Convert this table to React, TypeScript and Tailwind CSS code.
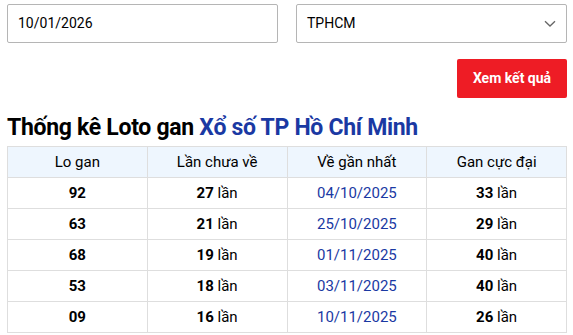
import React from "react";

const rows = [
  ["92", "27", "04/10/2025", "33"],
  ["63", "21", "25/10/2025", "29"],
  ["68", "19", "01/11/2025", "40"],
  ["53", "18", "03/11/2025", "40"],
  ["09", "16", "10/11/2025", "26"],
];

export default function App() {
  return (
    <div className="w-[573px] h-[335px] overflow-hidden bg-white pl-[7px] pr-[6px] pt-[4px] text-black" style={{ fontFamily: "Roboto, 'Liberation Sans', sans-serif" }}>
      <div className="grid grid-cols-2 gap-[18px]">
        <div className="h-[39px] border border-[#b5b5b5] rounded-[2px] flex items-center pl-[10px] text-[14px]">10/01/2026</div>
        <div className="h-[39px] border border-[#b5b5b5] rounded-[2px] flex items-center justify-between pl-[10px] pr-[10px] text-[14px]">
          <span>TPHCM</span>
          <svg width="12" height="8" viewBox="0 0 12 8" fill="none">
            <path d="M1 1.2 L6 6 L11 1.2" stroke="#666" strokeWidth="1.3" />
          </svg>
        </div>
      </div>
      <div className="flex justify-end mt-[16px]">
        <button className="w-[110px] h-[39px] bg-[#ee1c25] text-white text-[14px] font-bold rounded-[2px]">Xem kết quả</button>
      </div>
      <h2 className="mt-[16px] text-[23px] leading-[28px] font-bold tracking-[-0.3px]">
        Thống kê Loto gan <span className="text-[#1a39a3]">Xổ số TP Hồ Chí Minh</span>
      </h2>
      <table className="mt-[4px] w-[560px] border-collapse text-[15px] table-fixed">
        <thead>
          <tr className="bg-[#eef6fe] h-[31px]">
            {["Lo gan", "Lần chưa về", "Về gần nhất", "Gan cực đại"].map((h) => (
              <th key={h} className="border border-[#dedede] font-normal text-center">{h}</th>
            ))}
          </tr>
        </thead>
        <tbody>
          {rows.map((r) => (
            <tr key={r[0]} className="h-[31px]">
              <td className="border border-[#dedede] text-center font-bold">{r[0]}</td>
              <td className="border border-[#dedede] text-center"><b>{r[1]}</b> lần</td>
              <td className="border border-[#dedede] text-center text-[#1a39a3]">{r[2]}</td>
              <td className="border border-[#dedede] text-center"><b>{r[3]}</b> lần</td>
            </tr>
          ))}
        </tbody>
      </table>
    </div>
  );
}
